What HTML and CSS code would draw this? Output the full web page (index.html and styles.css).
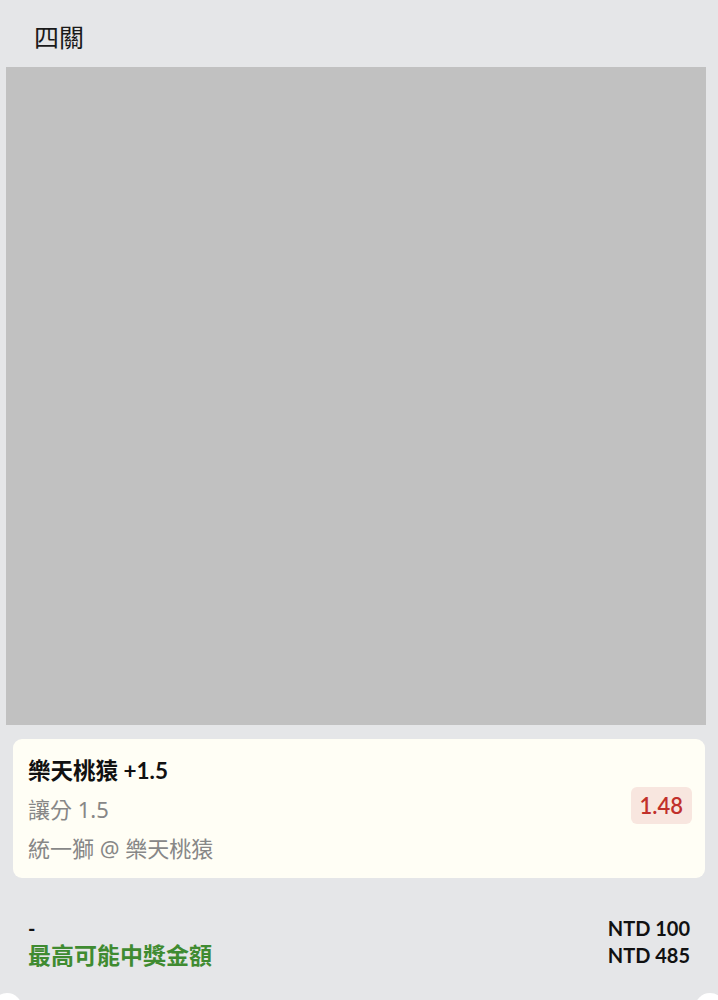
FILE: index.html
```html
<!DOCTYPE html>
<html lang="zh-Hant">
<head>
  <meta charset="UTF-8">
  <meta name="viewport" content="width=device-width, initial-scale=1.0">
  <title>四關</title>
  <link rel="stylesheet" href="styles.css">
</head>
<body>
  <div class="header">四關</div>
  <div class="banner"></div>

  <div class="bet-card">
    <div class="bet-info">
      <div class="bet-title">樂天桃猿 +1.5</div>
      <div class="bet-sub">讓分 1.5</div>
      <div class="bet-sub">統一獅 @ 樂天桃猿</div>
    </div>
    <div class="odds">1.48</div>
  </div>

  <div class="summary">
    <div class="summary-left">
      <div class="dash">-</div>
      <div class="max-win">最高可能中獎金額</div>
    </div>
    <div class="summary-right">
      <div>NTD 100</div>
      <div>NTD 485</div>
    </div>
  </div>

  <div class="next-edge">
    <span class="notch notch-left"></span>
    <span class="notch notch-right"></span>
  </div>
</body>
</html>
```

FILE: styles.css
```css
body { background-color: #e5e6e8; font-family: 'Lato', 'Noto Sans CJK TC', sans-serif; color: #111; margin: 0; height: 1000px; overflow: hidden; }
.header { height: 67px; line-height: 72px; padding-left: 34px; font-size: 25px; font-family: 'Noto Sans CJK TC', sans-serif; color: #1a1a1a; }
.banner { height: 658px; margin: 0 12px 0 6px; background-color: #c1c1c1; }
.bet-card { display: flex; align-items: center; justify-content: space-between; margin: 14px 13px 0 13px; padding: 13px 13px 10px 15px; background-color: #fffef5; border-radius: 9px; }
.bet-title { font-size: 22.5px; font-weight: 700; line-height: 38px; color: #111; }
.bet-sub { font-size: 22px; line-height: 39px; color: #878787; font-family: 'Noto Sans', 'Noto Sans CJK TC', sans-serif; }
.odds { background-color: #f8e6df; color: #c1302b; font-size: 22px; font-weight: 600; padding: 0 9px; height: 37px; line-height: 37px; border-radius: 6px; margin-bottom: 10px; }
.summary { display: flex; justify-content: space-between; padding: 37px 28px 0 28px; }
.dash { font-size: 20px; font-weight: 700; line-height: 27px; }
.max-win { font-size: 23px; font-weight: 700; line-height: 27px; color: #3f8b31; }
.summary-right { text-align: right; font-size: 20px; font-weight: 700; line-height: 27px; }
.next-edge { position: relative; height: 40px; margin-top: 24px; }
.notch { position: absolute; top: 0; width: 30px; height: 30px; border-radius: 50%; background-color: #fff; }
.notch-left { left: -8px; }
.notch-right { right: -7px; }
```
